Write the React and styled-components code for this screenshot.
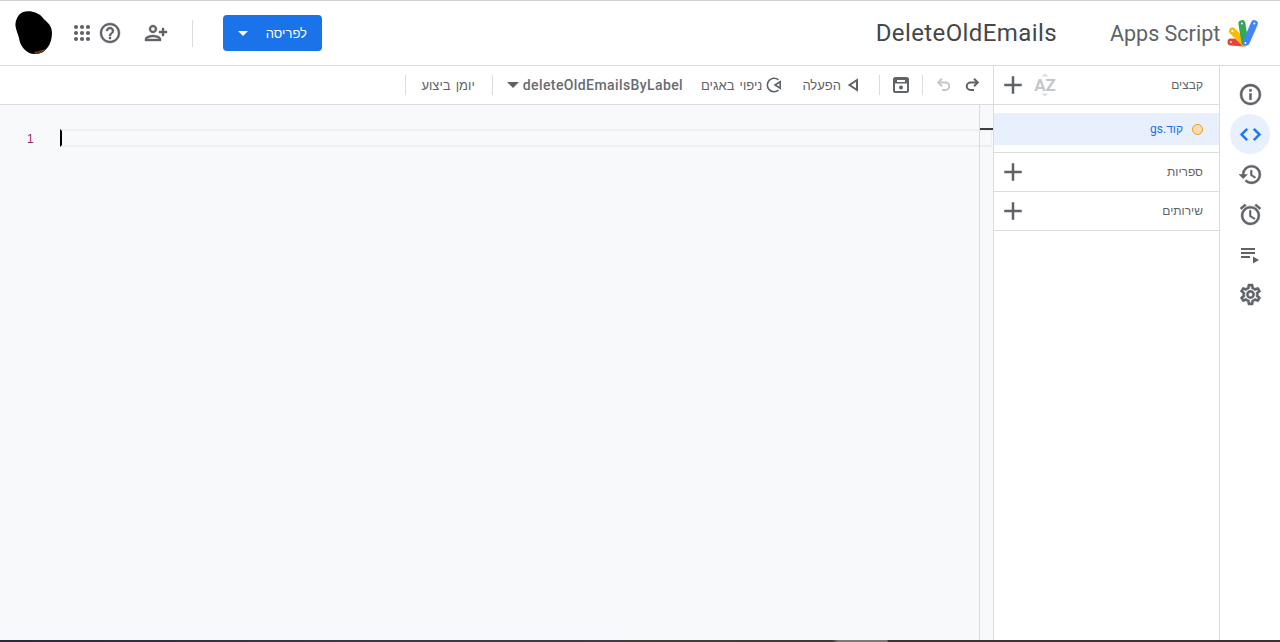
import React from 'react';
import styled, { createGlobalStyle } from 'styled-components';
import {
  MdAdd, MdAccessAlarm, MdCode, MdHelpOutline, MdHistory, MdInfoOutline,
  MdOutlineSettings, MdPersonAddAlt, MdArrowDropDown,
} from 'react-icons/md';

const GlobalStyle = createGlobalStyle`
  html, body { margin: 0; padding: 0; height: 100%; overflow: hidden; background: #fff; }
  body { font-family: Roboto, "Liberation Sans", sans-serif; color: #5f6368; }
  #root { height: 100%; }
`;

const Page = styled.div`
  height: 642px;
  display: flex;
  flex-direction: column;
  border-top: 1px solid #d0d1d3;
  box-sizing: border-box;
`;

const Header = styled.header`
  height: 65px;
  flex: none;
  box-sizing: border-box;
  display: flex;
  align-items: center;
  border-bottom: 1px solid #dadce0;
`;

const Brand = styled.div`
  width: 170px;
  flex: none;
  display: flex;
  align-items: center;
  gap: 7px;
  padding-right: 21px;
  box-sizing: border-box;
`;

const BrandName = styled.span`
  font-size: 21.5px;
  color: #5f6368;
  direction: ltr;
  white-space: nowrap;
`;

const ProjectTitle = styled.div`
  font-size: 24px;
  letter-spacing: 0.4px;
  color: #44474a;
  direction: ltr;
  margin-right: 53px;
`;

const HeaderActions = styled.div`
  margin-right: auto;
  display: flex;
  align-items: center;
  padding-left: 15px;
`;

const ShareButton = styled.button`
  width: 99px;
  height: 36px;
  border: 0;
  border-radius: 4px;
  background: #1a73e8;
  color: #fff;
  font-family: "Liberation Sans", sans-serif;
  font-size: 13px;
  display: flex;
  align-items: center;
  justify-content: space-between;
  padding: 0 15px 0 8px;
`;

const HeaderDivider = styled.span`
  width: 1px;
  height: 27px;
  background: #dadce0;
  margin: 0 30px 0 24px;
`;

const HeaderIcon = styled.span`
  display: flex;
  color: #5f6368;
  font-size: 24px;
  margin-left: ${p => p.gap || 0}px;
  svg { stroke: currentColor; stroke-width: 0.4; }
  svg path[fill="none"] { stroke: none; }
`;

const Avatar = styled.svg`
  width: 38px;
  height: 44px;
  display: block;
  margin-right: 5px;
`;

const Body = styled.div`
  flex: 1;
  min-height: 0;
  display: flex;
`;

const Rail = styled.nav`
  width: 61px;
  flex: none;
  box-sizing: border-box;
  border-left: 1px solid #dadce0;
  display: flex;
  flex-direction: column;
  align-items: center;
  padding-top: 8px;
`;

const RailItem = styled.div`
  width: 40px;
  height: 40px;
  border-radius: 50%;
  display: flex;
  align-items: center;
  justify-content: center;
  font-size: 25px;
  color: ${p => (p.active ? '#1a73e8' : '#5f6368')};
  background: ${p => (p.active ? '#e8f0fe' : 'transparent')};
  svg { stroke: currentColor; stroke-width: 0.5; }
  svg path[fill="none"] { stroke: none; }
`;

const Files = styled.aside`
  width: 226px;
  flex: none;
  box-sizing: border-box;
  border-left: 1px solid #dadce0;
  font-family: "Liberation Sans", sans-serif;
`;

const SectionRow = styled.div`
  height: 39px;
  box-sizing: border-box;
  border-bottom: 1px solid #dadce0;
  display: flex;
  align-items: center;
  justify-content: space-between;
  padding: 0 16px 0 4px;
  font-size: 12px;
  color: #5f6368;
`;

const RowTools = styled.div`
  display: flex;
  flex-direction: row-reverse;
  align-items: center;
  gap: 5px;
  font-size: 30px;
  color: #5f6368;
  svg { display: block; }
`;

const FileList = styled.div`
  height: 48px;
  box-sizing: border-box;
  padding-top: 8px;
  border-bottom: 1px solid #dadce0;
`;

const FileRow = styled.div`
  height: 32px;
  background: #e8f0fe;
  display: flex;
  align-items: center;
  gap: 9px;
  padding-right: 16px;
  font-family: Roboto, "Liberation Sans", sans-serif;
  font-size: 12px;
  color: #1a73e8;
`;

const UnsavedDot = styled.span`
  width: 9px;
  height: 9px;
  border-radius: 50%;
  background: #fddcb5;
  border: 1px solid #f29900;
`;

const Main = styled.main`
  flex: 1;
  min-width: 0;
  display: flex;
  flex-direction: column;
`;

const Toolbar = styled.div`
  height: 39px;
  flex: none;
  box-sizing: border-box;
  border-bottom: 1px solid #dadce0;
  display: flex;
  align-items: center;
  padding-right: 9px;
  font-size: 13px;
  color: #5f6368;
`;

const ToolIcon = styled.span`
  display: flex;
  width: 24px;
  justify-content: center;
  margin-left: 4px;
  color: ${p => (p.disabled ? '#c4c7c9' : '#5f6368')};
`;

const ToolDivider = styled.span`
  width: 1px;
  height: 20px;
  background: #dadce0;
  margin: 0 ${p => p.right}px 0 ${p => p.left}px;
`;

const ToolButton = styled.div`
  display: flex;
  align-items: center;
  gap: ${p => p.iconGap || 4}px;
  font-family: "Liberation Sans", sans-serif;
  font-size: 13px;
  word-spacing: 1.5px;
  margin-left: ${p => p.gap || 0}px;
  white-space: nowrap;
`;

const FunctionSelect = styled.div`
  display: flex;
  align-items: center;
  font-weight: 500;
  font-size: 14px;
  letter-spacing: 0.4px;
  gap: 4px;
  color: #686c70;
  &::after {
    content: '';
    border-top: 6px solid #5f6368;
    border-left: 6px solid transparent;
    border-right: 6px solid transparent;
  }
`;

const Editor = styled.div`
  flex: 1;
  min-height: 0;
  background: #f8f9fb;
  position: relative;
  direction: ltr;
  padding-top: 24px;
`;

const CodeLine = styled.div`
  display: flex;
  height: 18px;
`;

const Gutter = styled.span`
  width: 60px;
  flex: none;
  box-sizing: border-box;
  padding-left: 27px;
  font-family: "Liberation Sans", sans-serif;
  font-size: 12px;
  line-height: 21px;
  color: #a3275f;
`;

const CurrentLine = styled.div`
  flex: 1;
  box-sizing: border-box;
  margin-right: 1px;
  border: 2px solid #eeeff1;
  border-left: 2px solid #000;
  border-right-width: 1px;
`;

const Minimap = styled.div`
  position: absolute;
  top: 0;
  right: 0;
  bottom: 0;
  width: 14px;
  box-sizing: border-box;
  border-left: 1px solid #dadce0;
  &::before {
    content: '';
    position: absolute;
    top: 23px;
    left: 0;
    width: 13px;
    height: 2px;
    background: #3c4043;
  }
`;

const Taskbar = styled.div`
  height: 2px;
  flex: none;
  background: linear-gradient(90deg, #262c3c 0%, #333a47 25%, #3d3d42 50%, #3d3a3c 65%, #7c7a7c 65.5%, #7c7a7c 69.3%, #3f3236 69.4%, #3c3236 100%);
`;

function AppsDots() {
  const spots = [4, 10, 16];
  return (
    <svg width="20" height="20" viewBox="0 0 20 20" fill="#5f6368" style={{ stroke: 'none' }}>
      {spots.map(y => spots.map(x => <circle key={`${x}-${y}`} cx={x} cy={y} r="2.1" />))}
    </svg>
  );
}

function RunIcon() {
  return (
    <svg width="12" height="14" viewBox="0 0 12 14" fill="none" stroke="#5f6368" strokeWidth="2">
      <path d="M10 2v10L2.500 7z" />
    </svg>
  );
}

function DebugIcon() {
  return (
    <svg width="16" height="16" viewBox="0 0 16 16" fill="none" stroke="#5f6368" strokeWidth="1.6">
      <path d="M12.500 2.800A6.800 6.800 0 1 0 12.500 13.200" />
      <path d="M14.200 4.800v6.400L9 8z" />
    </svg>
  );
}

function RedoIcon({ flip }) {
  return (
    <svg width="16" height="16" viewBox="0 0 16 16" fill="none" stroke="currentColor" strokeWidth="2" style={flip ? { transform: 'scaleX(-1)' } : undefined}>
      <path d="M14 5.500H6.500a3.700 3.700 0 0 0 0 7.500H10" />
      <path d="M10 1.800l3.800 3.700-3.800 3.700" />
    </svg>
  );
}

function SaveIcon() {
  return (
    <svg width="16" height="16" viewBox="0 0 16 16">
      <rect x="1" y="1" width="14" height="14" rx="1.500" fill="none" stroke="#5f6368" strokeWidth="2" />
      <path d="M2 2h12v4.500H2z" fill="#5f6368" />
      <rect x="4" y="3" width="8" height="2" fill="#fff" />
      <circle cx="8" cy="10.500" r="2" fill="#5f6368" />
    </svg>
  );
}

function SortIcon() {
  return (
    <svg width="24" height="24" viewBox="0 0 24 24">
      <path d="M12 0.500l3.500 3h-7zM12 23.500l3.500-3h-7z" fill="#dadce0" />
      <text x="12" y="18" textAnchor="middle" fontFamily="Roboto, sans-serif" fontWeight="700" fontSize="17" fill="#c4c7c9">AZ</text>
    </svg>
  );
}

function QueueIcon() {
  return (
    <svg width="24" height="24" viewBox="0 0 24 24" fill="#5f6368" style={{ stroke: 'none' }}>
      <path d="M3 6h14v2H3zM3 10h14v2H3zM3 14h9v2H3zM15 14.500v7l6-3.500z" />
    </svg>
  );
}

function AppsScriptLogo() {
  return (
    <svg width="32" height="28" viewBox="0 0 32 28" fill="none" strokeLinecap="round" strokeWidth="7" style={{ display: 'block', direction: 'ltr' }}>
      <path d="M4 23L17 24" stroke="#ea4335" />
      <path d="M5.500 12L17.500 24" stroke="#fbbc04" />
      <path d="M15 4.500L18 23" stroke="#34a853" />
      <path d="M27.500 4.500L19.500 23" stroke="#4285f4" />
      <circle cx="27.500" cy="4.500" r="1" fill="#fff" />
      <circle cx="15" cy="4.500" r="1" fill="#fff" />
      <circle cx="5.500" cy="12" r="1" fill="#fff" />
      <circle cx="4" cy="23" r="1" fill="#fff" />
      <circle cx="18.500" cy="24" r="1" fill="#fff" />
    </svg>
  );
}

export default function App() {
  return (
    <Page dir="rtl">
      <GlobalStyle />
      <Header>
        <Brand>
          <AppsScriptLogo />
          <BrandName>Apps Script</BrandName>
        </Brand>
        <ProjectTitle>DeleteOldEmails</ProjectTitle>
        <HeaderActions>
          <ShareButton>
            לפריסה
            <MdArrowDropDown size={24} />
          </ShareButton>
          <HeaderDivider />
          <HeaderIcon gap={22}><MdPersonAddAlt /></HeaderIcon>
          <HeaderIcon gap={6}><MdHelpOutline /></HeaderIcon>
          <HeaderIcon gap={14}><AppsDots /></HeaderIcon>
          <Avatar viewBox="0 0 38 44">
            <path d="M8 1C14-1 24 1 28 7c2 3 9 6 9 15 0 12-7 21-17 21C11 43 5 35 4 27 3 23 1 19 0.500 15 0 10 3 3 8 1z" fill="#000" />
            <path d="M20 43c5 0 9-2 11-5-4 1-8 2-12 3z" fill="#5a3a1a" />
          </Avatar>
        </HeaderActions>
      </Header>
      <Body>
        <Rail>
          <RailItem><MdInfoOutline /></RailItem>
          <RailItem active><MdCode /></RailItem>
          <RailItem><MdHistory /></RailItem>
          <RailItem><MdAccessAlarm /></RailItem>
          <RailItem><QueueIcon /></RailItem>
          <RailItem><MdOutlineSettings /></RailItem>
        </Rail>
        <Files>
          <SectionRow>
            קבצים
            <RowTools><MdAdd /><SortIcon /></RowTools>
          </SectionRow>
          <FileList>
            <FileRow><UnsavedDot />קוד.gs</FileRow>
          </FileList>
          <SectionRow>
            ספריות
            <RowTools><MdAdd /></RowTools>
          </SectionRow>
          <SectionRow>
            שירותים
            <RowTools><MdAdd /></RowTools>
          </SectionRow>
        </Files>
        <Main>
          <Toolbar>
            <ToolIcon><RedoIcon /></ToolIcon>
            <ToolIcon disabled><RedoIcon flip /></ToolIcon>
            <ToolDivider left="9" right="5" />
            <ToolIcon><SaveIcon /></ToolIcon>
            <ToolDivider left="20" right="5" />
            <ToolButton gap={20} iconGap={6}><RunIcon />הפעלה</ToolButton>
            <ToolButton gap={18}><DebugIcon />ניפוי באגים</ToolButton>
            <FunctionSelect>deleteOldEmailsByLabel</FunctionSelect>
            <ToolDivider left="17" right="14" />
            <ToolButton gap={15}>יומן ביצוע</ToolButton>
            <ToolDivider left="0" right="0" />
          </Toolbar>
          <Editor>
            <CodeLine>
              <Gutter>1</Gutter>
              <CurrentLine />
            </CodeLine>
            <Minimap />
          </Editor>
        </Main>
      </Body>
      <Taskbar />
    </Page>
  );
}
